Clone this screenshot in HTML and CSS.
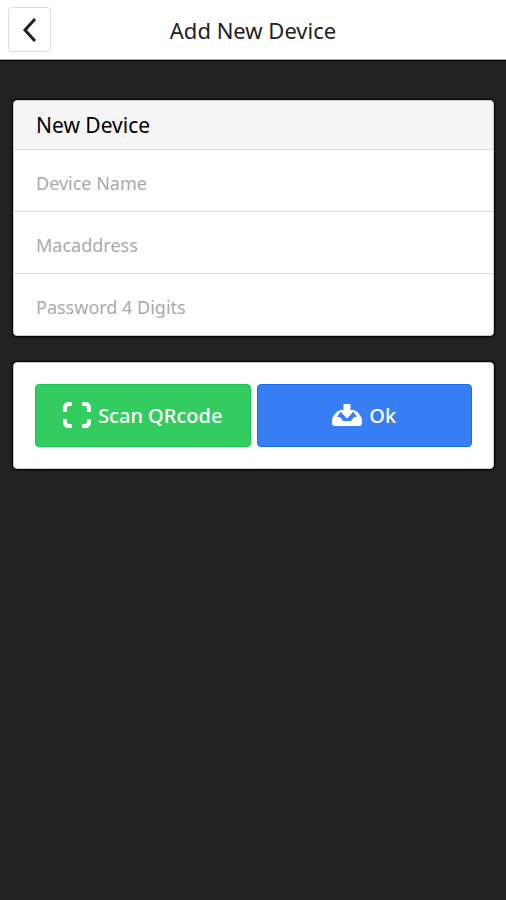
FILE: index.html
```html
<!DOCTYPE html>
<html lang="en">
<head>
  <meta charset="UTF-8">
  <meta name="viewport" content="width=device-width, initial-scale=1">
  <title>Add New Device</title>
  <link rel="stylesheet" href="styles.css">
</head>
<body>
  <header class="bar">
    <button class="back-button" type="button" aria-label="Back">
      <svg width="14" height="24" viewBox="0 0 14 24" aria-hidden="true">
        <path d="M12 1 L2 12 L12 23" fill="none" stroke="#222" stroke-width="3"/>
      </svg>
    </button>
    <h1 class="bar-title">Add New Device</h1>
  </header>

  <form class="content">
    <section class="card">
      <h2 class="card-title">New Device</h2>
      <input class="field" type="text" placeholder="Device Name" aria-label="Device Name">
      <input class="field" type="text" placeholder="Macaddress" aria-label="Macaddress">
      <input class="field" type="password" placeholder="Password 4 Digits" aria-label="Password 4 Digits">
    </section>

    <section class="card actions">
      <button class="button scan-button" type="button">
        <svg width="28" height="28" viewBox="0 0 28 28" aria-hidden="true">
          <path d="M2 10 V6 Q2 2 6 2 H9 M19 2 H22 Q26 2 26 6 V10 M26 17 V20 Q26 24 22 24 H19 M9 24 H6 Q2 24 2 20 V17" fill="none" stroke="#fff" stroke-width="4"/>
        </svg>
        Scan QRcode
      </button>
      <button class="button ok-button" type="button">
        <svg width="30" height="28" viewBox="0 0 30 28" aria-hidden="true">
          <path d="M6 9 H9 L5 15 H8 L11 19 H19 L22 15 H25 L21 9 H24 Q27 11 28.5 14 Q30 16 30 18 V21 Q30 24 27 24 H3 Q0 24 0 21 V18 Q0 16 1.5 14 Q3 11 6 9 Z" fill="#fff"/>
          <path d="M11.5 2 H18.5 V8 H23 L15 16.5 L7 8 H11.5 Z" fill="#fff"/>
        </svg>
        Ok
      </button>
    </section>
  </form>
</body>
</html>
```
FILE: styles.css
```css
* {
  box-sizing: border-box;
}
body {
  margin: 0;
  min-height: 100vh;
  background-color: #222;
  font-family: "Noto Sans", "Open Sans", sans-serif;
}
.bar {
  display: grid;
  grid-template-columns: 43px 1fr 43px;
  align-items: center;
  height: 60px;
  padding: 0 8px;
  background-color: #fff;
  border-bottom: 1px solid #aaa;
  box-shadow: 0 1px 1px #000;
}
.back-button {
  display: flex;
  align-items: center;
  justify-content: center;
  height: 45px;
  padding: 0;
  background-color: #fff;
  border: 1px solid #ddd;
  border-radius: 4px;
  cursor: pointer;
}
.bar-title {
  margin: 0;
  text-align: center;
  font-size: 22px;
  font-weight: 400;
  color: #222;
}
.content {
  display: flex;
  flex-direction: column;
  gap: 26px;
  padding: 40px 12px 40px 13px;
}
.card {
  overflow: hidden;
  background-color: #fff;
  border: 1px solid #ccc;
  border-radius: 4px;
  box-shadow: 0 0 2px 1px #000;
}
.card-title {
  margin: 0;
  padding: 0 22px;
  background-color: #f5f5f5;
  font-size: 21px;
  font-weight: 400;
  line-height: 48px;
  color: #000;
}
.field {
  display: block;
  width: 100%;
  height: 62px;
  padding: 4px 22px 0;
  border: 0;
  border-top: 1px solid #ddd;
  background-color: #fff;
  font-family: "Noto Sans", "Open Sans", sans-serif;
  font-size: 18px;
  color: #111;
}
.field::placeholder {
  color: #aaa;
  opacity: 1;
}
.actions {
  display: flex;
  gap: 6px;
  padding: 21px;
}
.button {
  flex: 1;
  display: flex;
  align-items: center;
  justify-content: center;
  gap: 7px;
  height: 63px;
  padding: 0;
  border: 1px solid;
  border-radius: 4px;
  font-family: "Noto Sans", "Open Sans", sans-serif;
  font-size: 20px;
  font-weight: 500;
  color: #fff;
  cursor: pointer;
}
.scan-button {
  background-color: #33cd5f;
  border-color: #18c152;
}
.ok-button {
  background-color: #387ef5;
  border-color: #186bea;
}
```
